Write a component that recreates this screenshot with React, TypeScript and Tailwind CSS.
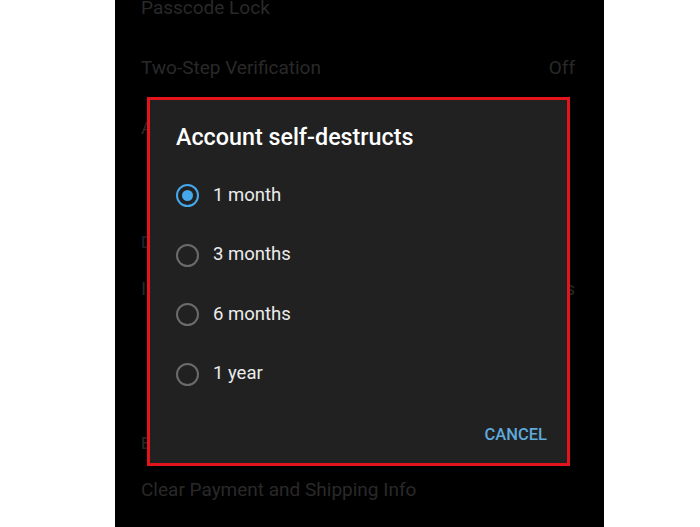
import { useState } from "react";

const options = ["1 month", "3 months", "6 months", "1 year"];

const Row = ({ label, value, h }: { label: string; value?: string; h: string }) => (
  <div className={`flex items-center justify-between pl-[26px] pr-[29px] text-[19px] text-[#292929] ${h}`}>
    <span>{label}</span>
    {value && <span>{value}</span>}
  </div>
);

const Radio = ({ checked }: { checked: boolean }) => (
  <span
    className={`flex h-[23px] w-[23px] items-center justify-center rounded-full border-[2.5px] ${
      checked ? "border-[#45a8ec]" : "border-[#6b6b6b]"
    }`}
  >
    {checked && <span className="h-[11px] w-[11px] rounded-full bg-[#45a8ec]" />}
  </span>
);

export default function App() {
  const [value, setValue] = useState(0);

  return (
    <div className="flex h-[527px] w-[700px] overflow-hidden bg-white pl-[115px] font-['Roboto',sans-serif]">
      <div className="relative h-full w-[489px] overflow-hidden bg-black">
        <div className="-mt-[22px] flex flex-col">
          <Row label="Passcode Lock" h="h-[60px]" />
          <Row label="Two-Step Verification" value="Off" h="h-[60px]" />
          <Row label="Active Sessions" h="h-[60px]" />
          <div className="h-[65px]" />
          <div className="flex h-[40px] items-center pl-[26px] text-[16px] font-medium text-[#1c232b]">Delete my account</div>
          <Row label="If away for" value="6 months" h="h-[52px]" />
          <div className="h-[109px]" />
          <div className="flex h-[40px] items-center pl-[26px] text-[16px] font-medium text-[#262626]">Bots and websites</div>
          <Row label="Clear Payment and Shipping Info" h="h-[52px]" />
        </div>

        <div className="absolute left-[32px] top-[97px] w-[423px] border-[3px] border-[#e3141b] bg-[#212121] pb-[18px] pl-[26px] pr-[20px] pt-[23px] text-white">
          <h2 className="text-[23.3px] font-medium leading-[28px]">Account self-destructs</h2>
          <div className="mt-[15px] flex flex-col">
            {options.map((o, i) => (
              <button
                key={o}
                onClick={() => setValue(i)}
                className="flex h-[59.5px] items-center gap-[14px] text-left text-[18.5px] text-[#ececec]"
              >
                <Radio checked={value === i} />
                <span>{o}</span>
              </button>
            ))}
          </div>
          <div className="mt-[21px] flex justify-end">
            <button className="text-[16.5px] font-medium leading-[20px] text-[#5fa9dc]">CANCEL</button>
          </div>
        </div>
      </div>
    </div>
  );
}
